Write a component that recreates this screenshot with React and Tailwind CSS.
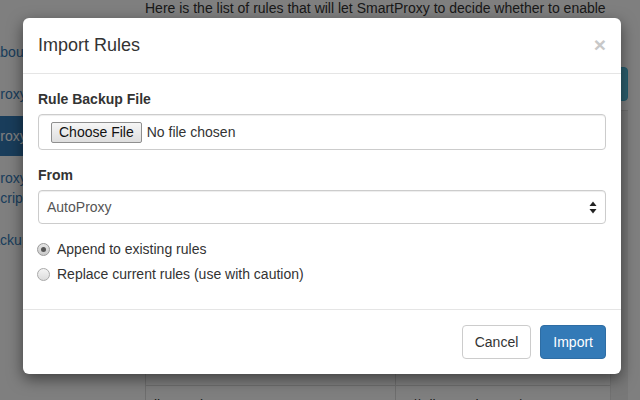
import React from 'react';

const navItems = [
  { label: 'About', shift: '-ml-[9px]' },
  { label: 'Proxy Servers', shift: '-ml-[9px]' },
  { label: 'Proxy Rules', shift: '-ml-[9px]', active: true },
  { label: 'Proxy Subscription Script', shift: '-ml-[9px]', two: true },
  { label: 'Backup', shift: '-ml-[17px]' },
];

const rows = [
  ['google.com', '*://*.google.com/*'],
  ['youtube.com', '*://*.youtube.com/*'],
  ['twitter.com', '*://*.twitter.com/*'],
  ['facebook.com', '*://*.facebook.com/*'],
  ['ggpht.com', '*://*.ggpht.com/*'],
  ['gstatic.com', '*://*.gstatic.com/*'],
  ['lb5.gqnbt.com', '*://*.lb5.gqnbt.com/*'],
];

function SelectArrows() {
  return (
    <svg width="8" height="13" viewBox="0 0 8 13" className="text-[#222]">
      <path d="M4 0.5 L7.5 5 H0.5 Z" fill="currentColor" />
      <path d="M4 12.5 L7.5 8 H0.5 Z" fill="currentColor" />
    </svg>
  );
}

function Radio({ checked, label }) {
  return (
    <label className="flex items-center h-[20px] leading-[20px]">
      <span
        className={`w-[13px] h-[13px] rounded-full border flex items-center justify-center ${
          checked
            ? 'border-[#9a9a9a] bg-gradient-to-b from-[#e6e6e6] to-[#c9c9c9]'
            : 'border-[#a9a9a9] bg-gradient-to-b from-[#f4f4f4] to-[#dcdcdc]'
        } ml-[-1px]`}
      >
        {checked && <span className="w-[5px] h-[5px] rounded-full bg-[#555]" />}
      </span>
      <span className="ml-[7px]">{label}</span>
    </label>
  );
}

export default function App() {
  return (
    <div className="relative w-[640px] h-[400px] overflow-hidden bg-white text-[14px] text-[#333] font-['Liberation_Sans',Arial,sans-serif]">
      {/* page behind the modal */}
      <div className="flex h-full">
        <div className="w-[145px] shrink-0 pt-[32px] overflow-hidden">
          {navItems.map((item) => (
            <div
              key={item.label}
              className={`mt-[2px] first:mt-0 py-[10px] leading-[20px] ${
                item.active ? 'bg-[#337ab7] text-white' : 'text-[#337ab7]'
              }`}
            >
              <div className={`${item.shift} w-[150px] whitespace-nowrap`}>
                {item.two ? (
                  <>
                    Proxy Subscription
                    <br />
                    Script
                  </>
                ) : (
                  item.label
                )}
              </div>
            </div>
          ))}
        </div>
        <div className="w-[483px] shrink-0 flex flex-col">
          <p className="-mt-[2px] leading-[20px] pr-[18px]">
            Here is the list of rules that will let SmartProxy to decide whether to enable proxy for a
            website or not.
          </p>
          <div className="mt-[29px] flex justify-end">
            <button className="h-[34px] px-[12px] rounded-[4px] bg-[#5bc0de] border border-[#46b8da] text-white">
              Add Rule
            </button>
          </div>
          <div className="mt-[9px] flex flex-1 border-l border-t border-[#ddd]">
            <div className="flex-1">
              <div className="flex h-[41px] border-b-2 border-[#ddd] font-bold items-center">
                <div className="w-[250px] px-[8px] border-r border-[#ddd] h-full flex items-center">Source</div>
                <div className="flex-1 px-[7px] h-full flex items-center">Match Pattern</div>
              </div>
              {rows.map(([a, b]) => (
                <div key={a} className="flex h-[39px] border-b border-[#ddd]">
                  <div className="w-[250px] px-[8px] pt-[9px] border-r border-[#ddd]">{a}</div>
                  <div className="flex-1 px-[7px] pt-[9px]">{b}</div>
                </div>
              ))}
            </div>
            <div className="w-[18px] bg-[#f1f1f1] border-l border-[#e3e3e3]" />
          </div>
        </div>
      </div>

      {/* backdrop */}
      <div className="absolute inset-0 bg-black/50" />

      {/* modal */}
      <div className="absolute left-[23px] top-[18px] w-[598px] rounded-[6px] bg-white shadow-[0_5px_15px_rgba(0,0,0,0.5)]">
        <div className="flex items-center justify-between px-[15px] py-[15px] border-b border-[#e5e5e5]">
          <h4 className="text-[18px] leading-[25px] text-[#333]">Import Rules</h4>
          <span className="text-[21px] font-bold leading-none text-[#c8c8c8] -mt-[3px]">×</span>
        </div>

        <div className="px-[15px] pt-[15px] pb-[25px]">
          <label className="block font-bold leading-[20px] mb-[5px]">Rule Backup File</label>
          <div className="h-[36px] flex items-center pl-[12px] border border-[#ccc] rounded-[4px] shadow-[inset_0_1px_1px_rgba(0,0,0,0.075)]">
            <span className="h-[21px] px-[7px] flex items-center border border-[#8f8f8f] rounded-[2px] bg-gradient-to-b from-[#f6f6f6] to-[#dedede] text-[#111]">
              Choose File
            </span>
            <span className="ml-[5px]">No file chosen</span>
          </div>

          <label className="block font-bold leading-[20px] mt-[15px] mb-[5px]">From</label>
          <div className="h-[34px] flex items-center justify-between pl-[8px] pr-[8px] border border-[#ccc] rounded-[4px] shadow-[inset_0_1px_1px_rgba(0,0,0,0.075)] text-[#555]">
            <span>AutoProxy</span>
            <SelectArrows />
          </div>

          <div className="mt-[15px] flex flex-col gap-[5px]">
            <Radio checked label="Append to existing rules" />
            <Radio label="Replace current rules (use with caution)" />
          </div>
        </div>

        <div className="flex justify-end gap-[9px] px-[15px] pt-[15px] pb-[15px] border-t border-[#e5e5e5]">
          <button className="h-[34px] px-[12px] rounded-[4px] border border-[#ccc] bg-white text-[#333]">Cancel</button>
          <button className="h-[34px] px-[12px] rounded-[4px] border border-[#2e6da4] bg-[#337ab7] text-white">
            Import
          </button>
        </div>
      </div>
    </div>
  );
}
